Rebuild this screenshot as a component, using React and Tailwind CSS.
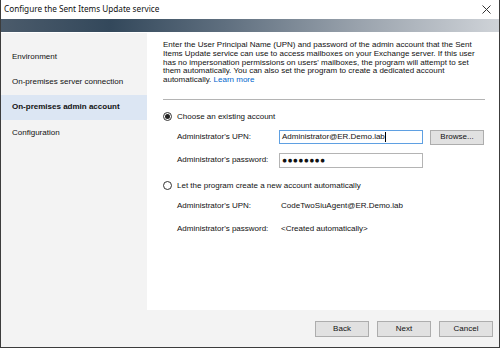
import React from 'react';

const navItems = [
  { label: "Environment" },
  { label: "On-premises server connection" },
  { label: "On-premises admin account", active: true },
  { label: "Configuration" },
];

const Radio = ({ checked }) => (
  <span className="w-[9px] h-[9px] rounded-full border border-[#333] bg-white flex items-center justify-center shrink-0">
    {checked && <span className="w-[5px] h-[5px] rounded-full bg-[#222]" />}
  </span>
);

const WizButton = ({ children }) => (
  <button className="w-[54px] h-[16px] bg-[#e1e1e1] border border-[#adadad] text-[8px] text-[#111] flex items-center justify-center">
    {children}
  </button>
);

const App = () => {
  return (
    <div
      className="w-[500px] h-[348px] flex flex-col bg-[#f3f3f3] border-x border-b border-[#3c3c3c] overflow-hidden text-[#1a1a1a]"
      style={{ fontFamily: '"Liberation Sans", Arial, sans-serif' }}
    >
      {/* Title bar */}
      <div className="h-[19px] bg-white flex items-center justify-between pl-[3px] pr-[6px] shrink-0">
        <span className="text-[8.2px] text-[#111]" style={{ fontFamily: '"Noto Sans", sans-serif' }}>
          Configure the Sent Items Update service
        </span>
        <svg width="9" height="9" viewBox="0 0 9 9" className="mr-[2px]">
          <path d="M0.5 0.5 L8.5 8.5 M8.5 0.5 L0.5 8.5" stroke="#333" strokeWidth="1" />
        </svg>
      </div>

      {/* Header band */}
      <div className="h-[13px] shrink-0 bg-[linear-gradient(90deg,#4b5b6b_0%,#33485b_22%,#5f6f7f_45%,#9aa3ad_72%,#cfd3d8_100%)]" />
      <div className="h-[1px] bg-white shrink-0" />

      <div className="flex flex-1 min-h-0">
        {/* Sidebar */}
        <div className="w-[146px] shrink-0 pt-[11px] flex flex-col">
          {navItems.map((item) => (
            <div
              key={item.label}
              className={`h-[25.3px] flex items-center pl-[11px] text-[8px] text-[#111] ${
                item.active ? "bg-[#dce6f3] font-bold" : ""
              }`}
            >
              {item.label}
            </div>
          ))}
        </div>

        {/* Main panel */}
        <div className="flex-1 bg-white pl-[16px] pr-[14px] pt-[8px] text-[8px] text-[#111]">
          <p className="leading-[8.8px] whitespace-nowrap">
            Enter the User Principal Name (UPN) and password of the admin account that the Sent
            <br />
            Items Update service can use to access mailboxes on your Exchange server. If this user
            <br />
            has no impersonation permissions on users' mailboxes, the program will attempt to set
            <br />
            them automatically. You can also set the program to create a dedicated account
            <br />
            automatically. <span className="text-[#0066cc]">Learn more</span>
          </p>

          <div className="mt-[14px] border-t border-[#b4b4b4]" />

          {/* Option 1 */}
          <div className="mt-[11px] flex items-center gap-[5px]">
            <Radio checked />
            <span>Choose an existing account</span>
          </div>
          <div className="mt-[7px] pl-[14px] flex items-center">
            <span className="w-[102px]">Administrator's UPN:</span>
            <div className="w-[144px] h-[14px] border border-[#5fa0e2] flex items-center pl-[2px]">
              Administrator@ER.Demo.lab
              <span className="w-[1px] h-[10px] bg-black" />
            </div>
            <div className="ml-[7px] w-[54px] h-[15px] bg-[#e1e1e1] border border-[#adadad] flex items-center justify-center">
              Browse...
            </div>
          </div>
          <div className="mt-[8px] pl-[14px] flex items-center">
            <span className="w-[102px]">Administrator's password:</span>
            <div className="w-[144px] h-[15px] border border-[#b4b4b4] flex items-center pl-[2px] text-[8.5px] tracking-[0.3px]">
              ●●●●●●●●
            </div>
          </div>

          {/* Option 2 */}
          <div className="mt-[12px] flex items-center gap-[5px]">
            <Radio />
            <span>Let the program create a new account automatically</span>
          </div>
          <div className="mt-[8px] pl-[14px] flex items-center">
            <span className="w-[104px]">Administrator's UPN:</span>
            <span>CodeTwoSiuAgent@ER.Demo.lab</span>
          </div>
          <div className="mt-[11px] pl-[14px] flex items-center">
            <span className="w-[104px]">Administrator's password:</span>
            <span>&lt;Created automatically&gt;</span>
          </div>
        </div>
      </div>

      {/* Footer */}
      <div className="h-[37px] shrink-0 flex items-center justify-end gap-[8px] pr-[6px]">
        <WizButton>Back</WizButton>
        <WizButton>Next</WizButton>
        <WizButton>Cancel</WizButton>
      </div>
    </div>
  );
};

export default App;
